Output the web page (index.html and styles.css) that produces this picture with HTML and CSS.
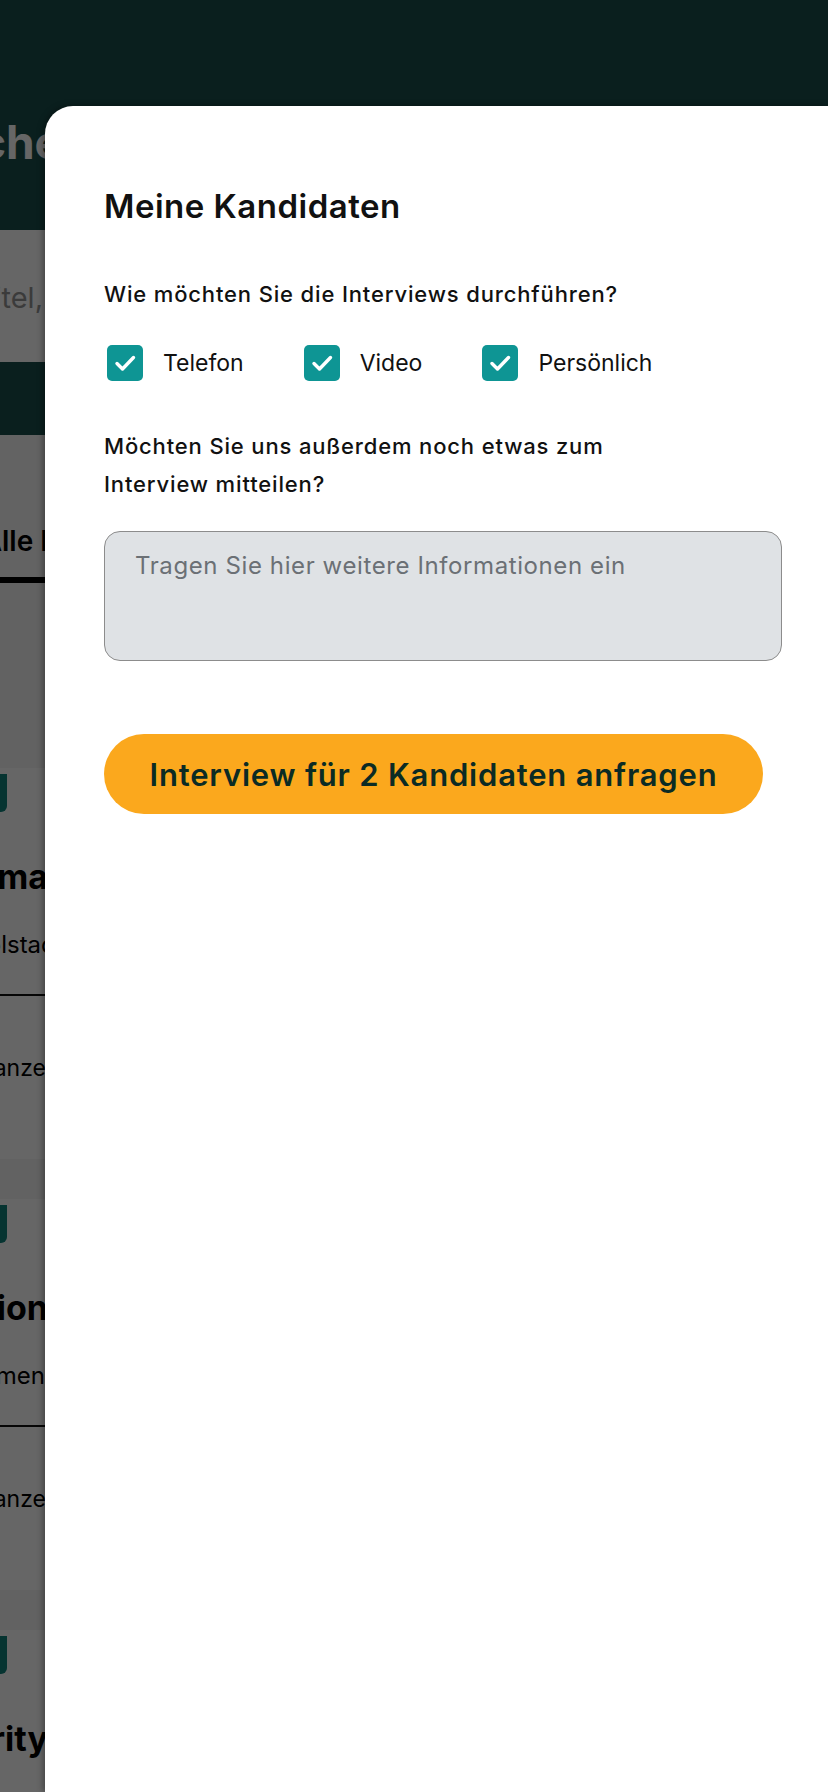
FILE: index.html
```html
<!DOCTYPE html>
<html lang="de">
<head>
    <meta charset="UTF-8">
    <meta name="viewport" content="width=device-width, initial-scale=1.0">
    <title>Meine Kandidaten</title>
    <link rel="stylesheet" href="styles.css">
</head>
<body>
    <!-- page behind the sheet -->
    <div class="page">
        <header class="top-bar">
            <h1 class="page-title clip"><span>Suche</span></h1>
        </header>
        <div class="search">
            <span class="search-text clip"><span>Jobtitel,</span></span>
        </div>
        <div class="tabs-bar"></div>
        <div class="tabs">
            <div class="tab active clip"><span>Alle K</span></div>
        </div>
        <div class="filters"></div>

        <article class="card">
            <div class="card-top">
                <span class="badge"></span>
                <h3 class="card-title clip"><span>Firma</span></h3>
                <p class="card-place card-place-long clip"><span>Ingolstadt</span></p>
            </div>
            <div class="card-bottom">
                <p class="card-meta clip"><span>Ganze</span></p>
            </div>
        </article>

        <article class="card">
            <div class="card-top">
                <span class="badge"></span>
                <h3 class="card-title clip"><span>Station</span></h3>
                <p class="card-place clip"><span>Unternehmen</span></p>
            </div>
            <div class="card-bottom">
                <p class="card-meta clip"><span>Ganze</span></p>
            </div>
        </article>

        <article class="card">
            <div class="card-top">
                <span class="badge"></span>
                <h3 class="card-title clip"><span>Security</span></h3>
            </div>
        </article>
    </div>
    <div class="backdrop"></div>

    <!-- bottom sheet -->
    <section class="sheet">
        <h2 class="sheet-title">Meine Kandidaten</h2>

        <p class="question">Wie möchten Sie die Interviews durchführen?</p>
        <div class="options">
            <label class="option">
                <span class="check">
                    <svg viewBox="0 0 36 36" width="36" height="36"><polyline points="10,18.5 15.5,24 26.5,12.5" fill="none" stroke="#fff" stroke-width="3.4" stroke-linecap="round" stroke-linejoin="round"/></svg>
                </span>
                Telefon
            </label>
            <label class="option">
                <span class="check">
                    <svg viewBox="0 0 36 36" width="36" height="36"><polyline points="10,18.5 15.5,24 26.5,12.5" fill="none" stroke="#fff" stroke-width="3.4" stroke-linecap="round" stroke-linejoin="round"/></svg>
                </span>
                Video
            </label>
            <label class="option">
                <span class="check">
                    <svg viewBox="0 0 36 36" width="36" height="36"><polyline points="10,18.5 15.5,24 26.5,12.5" fill="none" stroke="#fff" stroke-width="3.4" stroke-linecap="round" stroke-linejoin="round"/></svg>
                </span>
                Persönlich
            </label>
        </div>

        <p class="question question-narrow">Möchten Sie uns außerdem noch etwas zum Interview mitteilen?</p>
        <textarea class="notes" placeholder="Tragen Sie hier weitere Informationen ein"></textarea>

        <button class="request" type="button">Interview für 2 Kandidaten anfragen</button>
    </section>
</body>
</html>
```

FILE: styles.css
```css
/* General */
html, body {
    margin: 0;
    height: 1792px;
    overflow: hidden;
}

body {
    font-family: 'Inter', 'Noto Sans', Arial, sans-serif;
    color: #111;
    background: #f5f5f5;
    position: relative;
}

/* Page behind the sheet */
.page {
    width: 828px;
}

.clip {
    display: flex;
    justify-content: flex-end;
    white-space: nowrap;
    margin: 0;
}

.top-bar {
    height: 230px;
    background: #1b4e4b;
    box-sizing: border-box;
    padding-top: 114px;
}

.page-title {
    width: 62px;
    color: #fff;
    font-size: 46px;
    font-weight: 700;
    line-height: 56px;
}

.search {
    height: 132px;
    background: #fff;
    box-sizing: border-box;
    padding-top: 50px;
}

.search-text {
    width: 43px;
    color: #939393;
    font-size: 29px;
    line-height: 36px;
}

.tabs-bar {
    height: 73px;
    background: #1b4e4b;
}

.tabs {
    height: 148px;
    background: #f8f8f8;
    box-sizing: border-box;
    padding-top: 86px;
    border-bottom: 6px solid #000;
}

.tab {
    width: 60px;
    font-size: 28px;
    font-weight: 600;
    line-height: 40px;
    color: #000;
}

.filters {
    height: 185px;
}

.card {
    background: #fff;
    margin-bottom: 40px;
}

.card-top {
    padding: 6px 0 34px;
    border-bottom: 2px solid #111;
}

.badge {
    display: block;
    width: 7px;
    height: 38px;
    background: #11827c;
    border-radius: 0 0 6px 0;
    margin-bottom: 43px;
}

.card-title {
    width: 48px;
    font-size: 34px;
    font-weight: 700;
    line-height: 44px;
    color: #000;
}

.card-place {
    width: 45px;
    margin-top: 31px;
    font-size: 24px;
    line-height: 30px;
    color: #000;
}

.card-place-long {
    width: 64px;
}

.card-bottom {
    height: 163px;
    box-sizing: border-box;
    padding-top: 57px;
}

.card-meta {
    width: 46px;
    font-size: 23px;
    line-height: 30px;
    color: #000;
}

.backdrop {
    position: absolute;
    inset: 0;
    background: rgba(0, 0, 0, 0.6);
}

/* Bottom sheet */
.sheet {
    position: absolute;
    top: 106px;
    left: 45px;
    right: 0;
    bottom: 0;
    background: #fff;
    border-radius: 28px 0 0 0;
    box-shadow: -2px 0 6px rgba(0, 0, 0, 0.35);
    padding: 81px 46px 0 59px;
    box-sizing: border-box;
}

.sheet-title {
    margin: 0;
    font-size: 33px;
    line-height: 38px;
    font-weight: 600;
    letter-spacing: 0.5px;
    color: #111;
}

.question {
    margin: 54px 0 0;
    font-size: 22px;
    line-height: 30px;
    font-weight: 500;
    letter-spacing: 0.85px;
    color: #111;
}

.question-narrow {
    max-width: 520px;
    line-height: 38px;
    margin-top: 46px;
}

.options {
    display: flex;
    gap: 60px;
    margin-top: 36px;
    padding-left: 3px;
}

.option {
    display: flex;
    align-items: center;
    gap: 20px;
    font-size: 23px;
    line-height: 36px;
    color: #111;
}

.check {
    width: 36px;
    height: 36px;
    border-radius: 5px;
    background: #0e9594;
    display: flex;
}

.notes {
    display: block;
    width: 100%;
    height: 130px;
    margin-top: 28px;
    box-sizing: border-box;
    padding: 19px 30px;
    background: #dfe2e5;
    border: 1.5px solid #8c8c8c;
    border-radius: 16px;
    font-family: inherit;
    font-size: 24px;
    line-height: 30px;
    letter-spacing: 0.6px;
    resize: none;
}

.notes::placeholder {
    color: #6b7075;
}

.request {
    display: block;
    width: 659px;
    height: 80px;
    margin-top: 73px;
    border: none;
    border-radius: 40px;
    background: #fba81d;
    color: #0b2b24;
    font-family: inherit;
    font-size: 31px;
    font-weight: 600;
    letter-spacing: 0.8px;
}
```
